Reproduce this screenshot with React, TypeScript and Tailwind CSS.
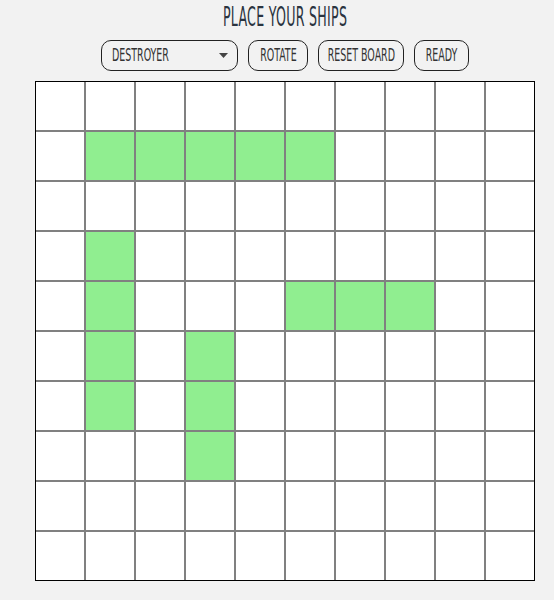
const GREEN = new Set<string>([
  '1-1', '1-2', '1-3', '1-4', '1-5',
  '3-1', '4-1', '5-1', '6-1',
  '5-3', '6-3', '7-3',
  '4-5', '4-6', '4-7',
]);

const FONT = { fontFamily: '"Liberation Sans Narrow", "DejaVu Sans Condensed", "Liberation Sans", sans-serif' };

const BTN = 'h-[31px] rounded-[10px] border border-[#222] bg-[#f2f2f2] px-[10px] flex items-center text-[#333]';

function Label({ text, size }: { text: string; size: string }) {
  return <span className={`inline-block origin-center ${size} whitespace-nowrap`}>{text}</span>;
}

export default function App() {
  const cells = [];
  for (let r = 0; r < 10; r++) {
    for (let c = 0; c < 10; c++) {
      const on = GREEN.has(`${r}-${c}`);
      cells.push(<div key={`${r}-${c}`} className={on ? 'bg-[#90ee90]' : 'bg-white'} />);
    }
  }

  return (
    <div className="min-h-[600px] w-[554px] bg-[#f2f2f2] flex flex-col items-center" style={FONT}>
      <div className="h-[33px] ml-[16px] flex items-center justify-center text-[#2a3440] pt-[2px]">
        <Label text="PLACE YOUR SHIPS" size="scale-x-[0.54] text-[26px] tracking-[0.5px]" />
      </div>
      <div className="mt-[7px] flex gap-[10px] ml-[16px]">
        <div className={`${BTN} w-[137px] justify-between pl-[10px] pr-[9px]`}>
          <span className="inline-block origin-left scale-x-[0.62] text-[17px] whitespace-nowrap">DESTROYER</span>
          <svg width="9" height="5" viewBox="0 0 9 5"><path d="M0 0h9L4.5 5z" fill="#444" /></svg>
        </div>
        <div className={`${BTN} w-[60px] justify-center`}>
          <Label text="ROTATE" size="scale-x-[0.62] text-[17px]" />
        </div>
        <div className={`${BTN} w-[86px] justify-center`}>
          <Label text="RESET BOARD" size="scale-x-[0.62] text-[17px]" />
        </div>
        <div className={`${BTN} w-[55px] justify-center`}>
          <Label text="READY" size="scale-x-[0.62] text-[17px]" />
        </div>
      </div>
      <div className="mt-[10px] ml-[16px] w-[500px] h-[500px] border border-black bg-[#808080] grid grid-cols-10 grid-rows-10 gap-[2px]">
        {cells}
      </div>
    </div>
  );
}
